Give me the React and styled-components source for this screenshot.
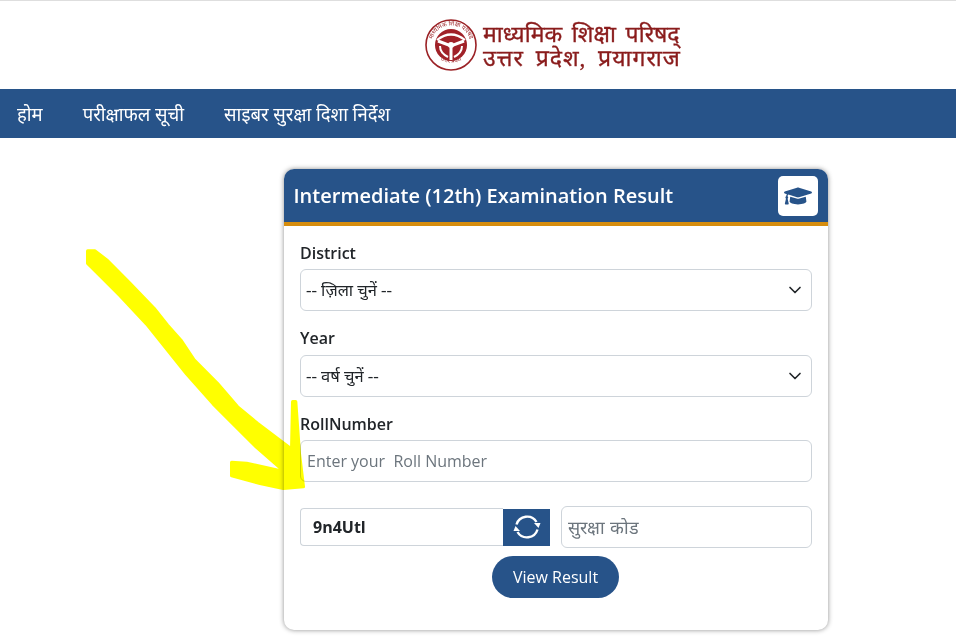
import React from "react";
import styled, { createGlobalStyle } from "styled-components";
import { FaGraduationCap } from "react-icons/fa";
import { ChevronDown } from "lucide-react";

const Global = createGlobalStyle`
  * { box-sizing: border-box; }
  html, body { margin: 0; padding: 0; background: #fff; }
  body { font-family: "Open Sans", "Noto Sans", sans-serif; color: #212529; }
`;

const Page = styled.div`
  position: relative;
  width: 956px;
  height: 637px;
  overflow: hidden;
`;

const Header = styled.header`
  height: 89px;
  border-top: 1px solid #dedede;
  display: flex;
  align-items: center;
  gap: 6px;
  padding-left: 425px;
`;

const LogoText = styled.div`
  color: #8a1c1c;
  font-family: "Liberation Serif", "Noto Sans", serif;
  font-size: 23px;
  line-height: 24px;
  padding-top: 3px;
  white-space: nowrap;
  -webkit-text-stroke: 0.35px #8a1c1c;
`;

const LogoLine = styled.div`
  word-spacing: ${(p) => p.$spacing}px;
  letter-spacing: ${(p) => p.$tracking || 0}px;
`;

const Nav = styled.nav`
  height: 49px;
  background: #275389;
  display: flex;
  align-items: center;
  padding-left: 17px;
  gap: 40px;
`;

const NavLink = styled.a`
  color: #fff;
  font-family: "Liberation Serif", "Noto Sans", serif;
  font-size: 18.5px;
`;

const Main = styled.main`
  padding: 31px 128px 0 284px;
`;

const Card = styled.section`
  height: 461px;
  background: #fff;
  border-radius: 10px;
  box-shadow: 0 0 5px rgba(0, 0, 0, 0.45);
  overflow: hidden;
`;

const CardHeader = styled.div`
  height: 57px;
  background: #275389;
  border-bottom: 4px solid #d68d0e;
  display: flex;
  align-items: center;
  justify-content: space-between;
  padding: 0 10px 0 9.5px;
`;

const CardTitle = styled.h2`
  margin: 0;
  color: #fff;
  font-size: 20px;
  font-weight: 600;
`;

const IconBox = styled.div`
  width: 40px;
  height: 40px;
  background: #fff;
  border-radius: 5px;
  display: flex;
  align-items: center;
  justify-content: center;
  color: #275389;
  font-size: 28px;
`;

const CardBody = styled.div`
  padding: 16px 16px 0;
`;

const Label = styled.label`
  display: block;
  height: ${(p) => p.$height || 27}px;
  font-size: 16px;
  font-weight: 600;
  line-height: 22px;
  color: #212529;
`;

const Field = styled.div`
  margin-bottom: ${(p) => p.$gap}px;
`;

const SelectWrap = styled.div`
  position: relative;
  height: 42px;
`;

const Select = styled.select`
  appearance: none;
  width: 100%;
  height: 100%;
  padding: 0 36px 0 5px;
  border: 1px solid #ced4da;
  border-radius: 6px;
  background: #fff;
  color: #212529;
  font-family: "Liberation Serif", "Noto Sans", serif;
  font-size: 16.5px;
`;

const Chevron = styled(ChevronDown)`
  position: absolute;
  right: 7px;
  top: 11px;
  pointer-events: none;
`;

const TextInput = styled.input`
  width: ${(p) => p.$width || "100%"};
  height: 42px;
  padding: 0 6px;
  border: 1px solid #ced4da;
  border-radius: 6px;
  font-family: "Open Sans", "Liberation Serif", sans-serif;
  font-size: ${(p) => p.$size || 16}px;
  &::placeholder { color: #6c757d; opacity: 1; }
`;

const CaptchaRow = styled.div`
  display: flex;
  align-items: center;
  height: 42px;
  margin-top: 24px;
`;

const CaptchaBox = styled.div`
  width: 203px;
  height: 38px;
  padding-left: 12px;
  display: flex;
  align-items: center;
  border: 1px solid #ced4da;
  border-right: 0;
  border-radius: 4px 0 0 4px;
  font-size: 16px;
  font-weight: 700;
  color: #212529;
`;

const RefreshButton = styled.button`
  width: 47px;
  height: 37px;
  padding: 0;
  border: 0;
  background: #275389;
  display: flex;
  align-items: center;
  justify-content: center;
  margin-right: 11px;
`;

const ButtonRow = styled.div`
  display: flex;
  justify-content: center;
  margin-top: 8px;
  padding-right: 1px;
`;

const ViewButton = styled.button`
  width: 127px;
  height: 42px;
  border: 0;
  border-radius: 21px;
  background: #275389;
  color: #fff;
  font-family: "Open Sans", sans-serif;
  font-size: 16px;
`;

const Marker = styled.svg`
  position: absolute;
  left: 70px;
  top: 240px;
  width: 260px;
  height: 260px;
  mix-blend-mode: multiply;
  pointer-events: none;
`;

const Emblem = () => (
  <svg width="52" height="52" viewBox="0 0 52 52">
    <defs>
      <path id="emblemTop" d="M6.5 26 A19.5 19.5 0 0 1 45.5 26" />
      <path id="emblemBottom" d="M7 30 A20 20 0 0 0 45 30" />
    </defs>
    <circle cx="26" cy="26" r="25" fill="#fff" stroke="#9b2226" strokeWidth="1.6" />
    <text fontSize="6" fill="#9b2226" textAnchor="middle" fontFamily="Liberation Serif, Noto Sans, serif">
      <textPath href="#emblemTop" startOffset="50%">माध्यमिक शिक्षा परिषद</textPath>
    </text>
    <text fontSize="6" fill="#9b2226" textAnchor="middle" fontFamily="Liberation Serif, Noto Sans, serif">
      <textPath href="#emblemBottom" startOffset="50%">उत्तर प्रदेश</textPath>
    </text>
    <circle cx="26" cy="26" r="16" fill="#a02128" />
    <path d="M12 21 Q26 10 40 21" stroke="#fff" strokeWidth="2.2" fill="none" />
    <path d="M13 22 L26 27 L39 22 M26 27 V41" stroke="#fff" strokeWidth="3" fill="none" />
    <path d="M15 27 Q15 34 23 38 M37 27 Q37 34 29 38" stroke="#fff" strokeWidth="2" fill="none" />
    <circle cx="26" cy="26" r="3" fill="#fff" />
  </svg>
);

const SyncIcon = () => (
  <svg width="30" height="30" viewBox="0 0 30 30" fill="none" stroke="#fff" strokeWidth="2.4">
    <path d="M4.5 12.5 A11 11 0 0 1 24.5 10" />
    <path d="M25.5 17.5 A11 11 0 0 1 5.5 20" />
    <path d="M22 11 H28.5 L26.5 16 Z" fill="#fff" stroke="none" />
    <path d="M8 19 H1.5 L3.5 14 Z" fill="#fff" stroke="none" />
  </svg>
);

export default function App() {
  return (
    <Page>
      <Global />
      <Header>
        <Emblem />
        <LogoText>
          <LogoLine $spacing={4}>माध्यमिक शिक्षा परिषद्</LogoLine>
          <LogoLine $spacing={5} $tracking={1}>उत्तर प्रदेश, प्रयागराज</LogoLine>
        </LogoText>
      </Header>
      <Nav>
        <NavLink>होम</NavLink>
        <NavLink>परीक्षाफल सूची</NavLink>
        <NavLink>साइबर सुरक्षा दिशा निर्देश</NavLink>
      </Nav>
      <Main>
        <Card>
          <CardHeader>
            <CardTitle>Intermediate (12th) Examination Result</CardTitle>
            <IconBox>
              <FaGraduationCap />
            </IconBox>
          </CardHeader>
          <CardBody>
            <Field $gap={16}>
              <Label>District</Label>
              <SelectWrap>
                <Select>
                  <option>-- ज़िला चुनें --</option>
                </Select>
                <Chevron size={20} color="#212529" strokeWidth={2} />
              </SelectWrap>
            </Field>
            <Field $gap={16}>
              <Label $height={28}>Year</Label>
              <SelectWrap>
                <Select>
                  <option>-- वर्ष चुनें --</option>
                </Select>
                <Chevron size={20} color="#212529" strokeWidth={2} />
              </SelectWrap>
            </Field>
            <Field $gap={0}>
              <Label>RollNumber</Label>
              <TextInput placeholder="Enter your  Roll Number" />
            </Field>
            <CaptchaRow>
              <CaptchaBox>9n4Utl</CaptchaBox>
              <RefreshButton>
                <SyncIcon />
              </RefreshButton>
              <TextInput $width="251px" $size={18} placeholder="सुरक्षा कोड" />
            </CaptchaRow>
            <ButtonRow>
              <ViewButton>View Result</ViewButton>
            </ButtonRow>
          </CardBody>
        </Card>
      </Main>
      <Marker viewBox="0 0 780 780">
        <path
          fill="#ffff00"
          stroke="#ffff00"
          strokeWidth="10"
          strokeLinejoin="round"
          d="M53 33 L75 33 L110 60 L180 130 L252 205 L292 255 L332 300 L372 360 L442 430 L502 500 L562 550 L665 628 L668 485 L677 485 L688 640 L700 740 L640 745 L570 730 L485 707 L485 667 L530 670 L645 696 L560 622 L505 567 L430 492 L350 402 L290 327 L230 252 L150 167 L90 107 L53 70 Z"
        />
      </Marker>
    </Page>
  );
}
